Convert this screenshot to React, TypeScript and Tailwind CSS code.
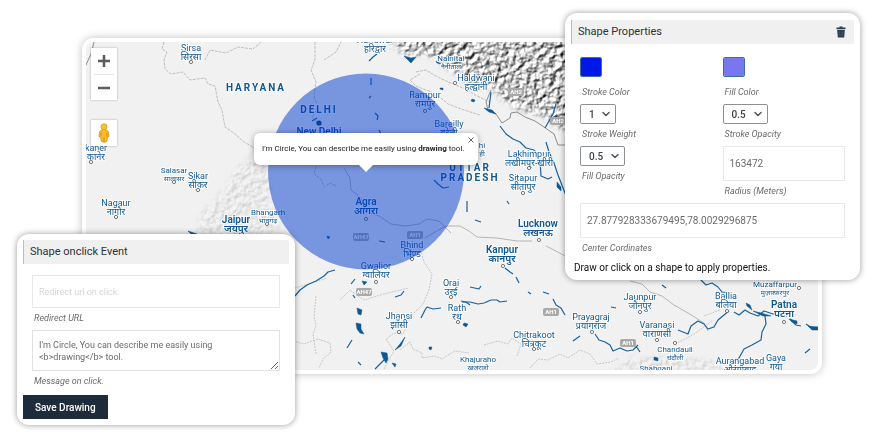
import React, { useState } from 'react';
import { ChevronDown } from 'lucide-react';

type Size = 'sm' | 'md' | 'lg';

interface City {
  name: string;
  hindi?: string;
  x: number;
  y: number;
  size: Size;
  dot?: [number, number];
}

const CITIES: City[] = [
  { name: 'Sirsa', hindi: 'सिरसा', x: 191, y: 51, size: 'md', dot: [191, 62] },
  { name: 'Haridwar', hindi: 'हरिद्वार', x: 375, y: 43, size: 'md' },
  { name: 'Nainital', hindi: 'नैनीताल', x: 451, y: 61, size: 'sm' },
  { name: 'Haldwani', hindi: 'हल्द्वानी', x: 476, y: 81, size: 'md', dot: [455, 83] },
  { name: 'Rampur', hindi: 'रामपुर', x: 425, y: 98, size: 'md', dot: [425, 111] },
  { name: 'Bareilly', hindi: 'बरेली', x: 449, y: 127, size: 'md' },
  { name: 'hi', hindi: 'ही', x: 482, y: 148, size: 'sm' },
  { name: 'New Delhi', x: 319, y: 135, size: 'lg' },
  { name: 'kaner', hindi: 'कानेर', x: 96, y: 151, size: 'md', dot: [91, 162] },
  { name: 'Salasar', hindi: 'सालासर', x: 174, y: 173, size: 'sm', dot: [174, 182] },
  { name: 'Sikar', hindi: 'सीकर', x: 198, y: 179, size: 'md', dot: [198, 190] },
  { name: 'Nagaur', hindi: 'नागौर', x: 116, y: 206, size: 'md', dot: [116, 217] },
  { name: 'Jaipur', hindi: 'जयपुर', x: 236, y: 223, size: 'lg' },
  { name: 'Bhangarh', hindi: 'भानगढ़', x: 268, y: 215, size: 'sm', dot: [267, 224] },
  { name: 'Agra', hindi: 'आगरा', x: 366, y: 205, size: 'lg', dot: [366, 219] },
  { name: 'Lakhimpur', hindi: 'लखीमपुर-खीरी', x: 529, y: 157, size: 'md', dot: [529, 168] },
  { name: 'Sitapur', hindi: 'सीतापुर', x: 523, y: 181, size: 'md', dot: [523, 193] },
  { name: 'Lucknow', hindi: 'लखनऊ', x: 538, y: 227, size: 'lg', dot: [539, 240] },
  { name: 'Kanpur', hindi: 'कानपुर', x: 502, y: 253, size: 'lg', dot: [503, 266] },
  { name: 'Bhind', hindi: 'भिण्ड', x: 412, y: 248, size: 'md', dot: [412, 259] },
  { name: 'Gwalior', hindi: 'ग्वालियर', x: 376, y: 269, size: 'md', dot: [376, 282] },
  { name: 'Orai', hindi: 'उरई', x: 451, y: 286, size: 'md', dot: [451, 297] },
  { name: 'Jhansi', hindi: 'झाँसी', x: 399, y: 319, size: 'md', dot: [399, 332] },
  { name: 'Rath', hindi: 'रथ', x: 457, y: 311, size: 'md', dot: [458, 322] },
  { name: 'Prayagraj', hindi: 'प्रयागराज', x: 591, y: 320, size: 'md', dot: [592, 332] },
  { name: 'Chitrakoot', hindi: 'चित्रकूट', x: 534, y: 338, size: 'md', dot: [534, 349] },
  { name: 'Khajuraho', hindi: 'खजुराहो', x: 478, y: 362, size: 'sm' },
  { name: 'Jaunpur', hindi: 'जौनपुर', x: 640, y: 300, size: 'md', dot: [640, 312] },
  { name: 'Varanasi', hindi: 'वाराणसी', x: 657, y: 328, size: 'md', dot: [657, 340] },
  { name: 'Chandauli', hindi: 'चंदौली', x: 675, y: 352, size: 'sm', dot: [675, 343] },
  { name: 'Shahganj', x: 656, y: 371, size: 'sm' },
  { name: 'Ballia', hindi: 'बलिया', x: 726, y: 299, size: 'md', dot: [727, 311] },
  { name: 'Muzaffarpur', hindi: 'मुज़फ़्फ़रपुर', x: 775, y: 287, size: 'sm', dot: [799, 288] },
  { name: 'Patna', hindi: 'पटना', x: 784, y: 308, size: 'lg', dot: [784, 322] },
  { name: 'Aurangabad', hindi: 'औरंगाबाद', x: 740, y: 364, size: 'md' },
  { name: 'Gaya', hindi: 'गया', x: 776, y: 361, size: 'md' },
];

const SIZE_CLASS: Record<Size, string> = {
  sm: 'text-[8px]',
  md: 'text-[9px]',
  lg: 'text-[10px] font-semibold',
};

const HINDI_CLASS: Record<Size, string> = {
  sm: 'text-[7px]',
  md: 'text-[9px]',
  lg: 'text-[10px] font-semibold',
};

const RIVERS = [
  'M295 296l5-6 7-5 9-4 8-5 4-4 7-2M351 284l4-5M355 298l-2-3M395 297l6-2 3-4M421 318l4-8 2-3 6 2 8-1M461 301l5 1 4 3',
  'M347 348l5-8M375 369l6-6 4-4M462 302l8 0 8 2 6-1 7-3 6 0 3 2 7-1',
  'M500 126l6 8 7 5 7 3 6 6 8 2 4 5M545 128l8-14 3-10M549 120l8-5M546 142l3 10 5 11 4 12 7 18 4 11',
  'M540 160l1 16 7 3 4-2M467 201l0 11M475 220l6 2M507 201l2 3M434 180l4 4 5 4 6-1M489 108l1-8 1-8',
  'M505 268l5 4 3 2M516 277l3 6M528 292l3 2M543 292l6 2M553 299l3 6 5 3 4 7M470 287l9 2 2-3M573 341l7-5M611 307l5 1',
  'M595 334l4 6 6 2 5 3 3 6 7-3 7 3 6-1 5-5M636 346l4 6',
  'M678 330l5 2 5 2 3-8 7-5 6 3 4 5 6-2 4-7 6-5 5-4M734 312l5 3 6-5 5 3 8 3 6-5 6 2 9 3 8 0',
  'M765 316l1 8-4 8-1 8-9 5-8 4-5 9-7 4M790 319l6 6 5 1M806 324l7 5 5-2M805 353l5-4',
  'M371 78l0 7M371 96l-2 2M375 113l3 3-1 4M379 130l2 4M312 121l5-3M369 61l4-4 4-3',
  'M700 279l6 6 6-2 6 4 4 5 8 1M662 285l4 3M358 362l3 3M385 242l-6-1',
];

const LAKES = [
  'M404 56l7 2 5-1-5 6z',
  'M484 108l8 2 4 4-7-2z',
  'M436 61l5 3-4-1z',
  'M472 99l3 1-1 2-3-1z',
  'M440 88l3 0 0 2-3-1z',
  'M357 308l5 2-1 5-3-1z',
  'M356 323l5 1 0 5 3 5-4-1-3-4z',
  'M381 352l6 1 1 6-2 4-3-5z',
  'M392 363l4 1-1 3z',
  'M405 337l-5 7-5 6 6-4z',
  'M464 323l4 1-2 3-3-2z',
  'M362 281l5 1-3 3z',
  'M429 347l3 0-1 3-2-1z',
  'M327 236l3 1-2 2z',
  'M746 303l4 2 2 5-5-4z',
  'M753 311l8 2 10 3-8 0z',
  'M654 357l4 1 0 3-4-1z',
  'M789 319l8 2 0 3-5-2z',
  'M808 326l10 1 0 3-6 0z',
  'M557 182l4 5 0 4-4-4z',
  'M188 231l9 3-5 1z',
];

const ROADS =
  'M344 168l6 10 1 12 10 8 6 14 12 4 12 8 14 2 14-2 8-5 12 2 12 12M546 246l8 4 11 6M690 280l-6-8-10-6M630 281l12 3 8 8 12 4 12 9 14 8 16 10 4 8M425 238l10-6 11-6 14 0 9 5 8 6 20 1 20 3 15 0';

const BORDERS =
  'M164 42l-2 7 5 3-3 8 1 9 6 5 12-2 7 8 15-2 3 6 7 2 3 16 4 8 3 17 9 6 10 9 9 5 12 16M205 60l5-10 16 3 12-6 15 2 8-7M315 42l0 18-4 10 5 12-2 14 4 12-6 9 8 8 2 18M316 166l-2 8 7 5 3 8 6-4 6 3M324 60l12-8 5-10M416 72l10-2 8 5 8 4 9 4 12 5 14 8 13 6M420 74l-10 6 6 6 20 8 12 10 16 6 16 5';

const BORDERS_SOUTH =
  'M316 296l-2 20 2 10-3 8 3 20M290 340l14 4 14-5 12 4 1 9-8 7-4 9M384 369l10-18-8-12 8-6 9 1 8-18 12-12 6-14 3-16-8-12-4-14M400 350l10-8 3 7 9 4 0 5 13-2 7 3 13-8 14 2M484 345l14-4 10 3 4-6 9 6-4 12M530 368l8-9 10 1 12-6 8 4 12-8 10 4 7 10 14-2 8-4M675 344l12-6 10-6 8-6 8-6M704 316l16-6M295 288l20-6 12-4M340 300l10-10 14 10 20-6 25-6';

const BORDER_NEPAL =
  'M491 90l-5 12 2 8 8 4 6 9 8-5 1-5 6-1 8 5 10 4 9 6 10 7 4 11 8 0';

const LabelText: React.FC<{ x: number; y: number; className: string; children: string }> = ({
  x,
  y,
  className,
  children,
}) => (
  <text
    x={x}
    y={y}
    textAnchor="middle"
    stroke="#fff"
    strokeWidth="2"
    strokeOpacity="0.85"
    strokeLinejoin="round"
    paintOrder="stroke"
    className={`fill-[#0f5791] ${className}`}
  >
    {children}
  </text>
);

const RoadBadge: React.FC<{ x: number; y: number; label: string }> = ({ x, y, label }) => (
  <g>
    <rect x={x - 8} y={y - 4} width="16" height="8" rx="2" fill="#a9a9a9" />
    <text x={x} y={y + 2} textAnchor="middle" fill="#fff" className="text-[6px] font-bold">
      {label}
    </text>
  </g>
);

const MapDrawing: React.FC = () => (
  <svg
    viewBox="86 42 732 328"
    preserveAspectRatio="xMinYMin slice"
    className="block h-[328px] w-full font-[Roboto,'Noto_Sans',sans-serif]"
    role="img"
    aria-label="Map"
  >
    <defs>
      <filter id="hills" x="0" y="0" width="100%" height="100%" colorInterpolationFilters="sRGB">
        <feTurbulence type="fractalNoise" baseFrequency="0.17" numOctaves="4" seed="8" result="noise" />
        <feDiffuseLighting in="noise" surfaceScale="3" lightingColor="#fff" diffuseConstant="1.08" result="lit">
          <feDistantLight azimuth="225" elevation="50" />
        </feDiffuseLighting>
        <feComposite in="lit" in2="SourceGraphic" operator="in" />
      </filter>
      <filter id="soft">
        <feGaussianBlur stdDeviation="3" />
      </filter>
      <mask id="ridge">
        <path
          d="M384 20l8 24 16 12 14-2 12 2 14 12 14 8 12 10 18 0 12 14 18 10 18 4 22 14 20 20V20z"
          fill="#fff"
          filter="url(#soft)"
        />
      </mask>
      <mask id="aravalli">
        <path
          d="M262 150l8 30 0 20 10 30-30 10-30 0-25 20 5-45 20-20 20-30z"
          fill="#fff"
          fillOpacity="0.4"
          filter="url(#soft)"
        />
        <path d="M600 380l30-22 50-2 40 6 20 18z" fill="#fff" fillOpacity="0.4" filter="url(#soft)" />
      </mask>
    </defs>

    <rect x="86" y="42" width="732" height="328" fill="#f1f1f1" />

    <g mask="url(#ridge)">
      <rect x="370" y="42" width="200" height="130" filter="url(#hills)" />
    </g>
    <g mask="url(#aravalli)" opacity="0.4">
      <rect x="180" y="140" width="110" height="120" filter="url(#hills)" />
      <rect x="600" y="345" width="140" height="25" filter="url(#hills)" />
    </g>

    <g fill="none">
      <path d={BORDERS} stroke="#bdbdbd" strokeWidth="1" strokeDasharray="3 1" />
      <path d={BORDERS_SOUTH} stroke="#c6c6c6" strokeWidth="1" strokeDasharray="2 1" />
      <path d={BORDER_NEPAL} stroke="#8d8d8d" strokeWidth="1" />
      <path d={ROADS} stroke="#b5b5b5" strokeWidth="1" />
      <path d="M94 42l-3 12-6 13" stroke="#8d8d8d" strokeWidth="1" />
      {RIVERS.map((d) => (
        <path key={d} d={d} stroke="#17629c" strokeWidth="1.2" strokeLinejoin="round" />
      ))}
    </g>
    {LAKES.map((d) => (
      <path key={d} d={d} fill="#0f5791" stroke="#0f5791" strokeWidth="0.5" />
    ))}

    <RoadBadge x={361} y={237} label="AH47" />
    <RoadBadge x={415} y={235} label="AH1" />
    <RoadBadge x={364} y={292} label="AH47" />
    <RoadBadge x={551} y={312} label="AH1" />
    <RoadBadge x={628} y={343} label="AH1" />
    <RoadBadge x={516} y={92} label="AH2" />
    <RoadBadge x={558} y={121} label="AH2" />

    {CITIES.map((city) => (
      <g key={city.name}>
        <LabelText x={city.x} y={city.y} className={SIZE_CLASS[city.size]}>
          {city.name}
        </LabelText>
        {city.hindi && (
          <LabelText x={city.x} y={city.y + (city.size === 'sm' ? 8 : 9)} className={HINDI_CLASS[city.size]}>
            {city.hindi}
          </LabelText>
        )}
        {city.dot && (
          <circle cx={city.dot[0]} cy={city.dot[1]} r="1.6" fill="#fff" stroke="#666" strokeWidth="0.9" />
        )}
      </g>
    ))}
    <circle cx="319" cy="123" r="2.6" fill="#0d4f66" />

    <LabelText x={256} y={91} className="text-[10px] font-bold tracking-[2px]">HARYANA</LabelText>
    <LabelText x={319} y={113} className="text-[10px] font-bold tracking-[2px]">DELHI</LabelText>
    <LabelText x={470} y={171} className="text-[10px] font-bold tracking-[2px]">UTTAR</LabelText>
    <LabelText x={470} y={181} className="text-[10px] font-bold tracking-[2px]">PRADESH</LabelText>

    <circle cx="366" cy="171.500" r="98" fill="#0039d0" fillOpacity="0.5" />
  </svg>
);

const Pegman: React.FC = () => (
  <svg viewBox="0 0 12 20" className="h-5 w-3">
    <path
      d="M3 7.200Q6 6 9 7.200Q10.600 8 10.700 10L11 13.500L9.400 14L9 18.500Q6 20 3.200 18.500L2.700 14L1 13.500L1.300 10Q1.400 8 3 7.200Z"
      fill="#fbbc2c"
      stroke="#c98d1b"
      strokeWidth="0.7"
    />
    <path d="M6 14v5M3.300 9.500l-.4 4M8.700 9.500l.4 4" stroke="#b97d12" strokeWidth="0.7" fill="none" />
    <circle cx="6" cy="3.800" r="3.100" fill="#fbc02d" stroke="#c98d1b" strokeWidth="0.6" />
  </svg>
);

const TrashIcon: React.FC = () => (
  <svg viewBox="0 0 10 12" className="h-3 w-2.5">
    <path d="M3.500 0.500h3v1h3v1.700h-9V1.500h3z" fill="#2c3e50" />
    <path d="M1.200 4h7.600L8.200 11.500H1.800z" fill="#2c3e50" />
    <path d="M3.500 5.500l.3 4.500M6.500 5.500l-.3 4.500" stroke="#5a6876" strokeWidth="0.5" />
  </svg>
);

const MapView: React.FC = () => {
  const [showInfo, setShowInfo] = useState(true);

  return (
    <section className="relative ml-[82px] mr-[55px] overflow-hidden rounded-xl border-4 border-white shadow-[0_0_8px_rgba(0,0,0,0.25)]">
      <MapDrawing />

      {/* Map controls */}
      <div className="absolute left-[5px] top-1.5 flex flex-col gap-5">
        <div className="flex w-[26px] flex-col items-center bg-white shadow-[0_0_2px_rgba(0,0,0,0.3)]">
          <button aria-label="Zoom in" className="flex h-[26px] w-full items-center justify-center">
            <svg viewBox="0 0 12 12" className="size-3" fill="none" stroke="#5c5c5c" strokeWidth="2.500">
              <path d="M6 0v12M0 6h12" />
            </svg>
          </button>
          <div className="h-px w-5 bg-[#e6e6e6]" />
          <button aria-label="Zoom out" className="flex h-[25px] w-full items-center justify-center">
            <svg viewBox="0 0 12 12" className="size-3" fill="none" stroke="#5c5c5c" strokeWidth="2.500">
              <path d="M0 6h12" />
            </svg>
          </button>
        </div>
        <button
          aria-label="Street view"
          className="flex size-[26px] items-center justify-center bg-white shadow-[0_0_2px_rgba(0,0,0,0.3)]"
        >
          <Pegman />
        </button>
      </div>

      {/* Info window */}
      {showInfo && (
        <div className="absolute left-[168px] top-[91px] flex h-8 w-56 items-center rounded-md bg-white px-2 shadow-[0_1px_6px_rgba(0,0,0,0.35)]">
          <p className="whitespace-nowrap font-[Roboto,sans-serif] text-[8px] text-[#222]">
            I'm Circle, You can describe me easily using <b>drawing</b> tool.
          </p>
          <button
            aria-label="Close"
            onClick={() => setShowInfo(false)}
            className="absolute right-1 top-1 flex size-1.5 items-center justify-center"
          >
            <svg viewBox="0 0 6 6" className="size-1.5" stroke="#666" strokeWidth="1">
              <path d="M0.500 0.500l5 5M5.500 0.500l-5 5" />
            </svg>
          </button>
          <svg viewBox="0 0 14 7" className="absolute left-1/2 top-full h-[7px] w-3.5 -translate-x-1/2">
            <path d="M0 0h14L7 7z" fill="#fff" />
          </svg>
        </div>
      )}
    </section>
  );
};

const PanelHeader: React.FC<{ title: string; children?: React.ReactNode }> = ({ title, children }) => (
  <header className="flex h-6 items-center justify-between border-l border-[#f5bd2b] bg-[#f0f0f0] pl-1.5 pr-2">
    <h2 className="text-[11px] text-[#2c3338]">{title}</h2>
    {children}
  </header>
);

const FieldLabel: React.FC<{ htmlFor: string; children: string }> = ({ htmlFor, children }) => (
  <label htmlFor={htmlFor} className="ml-0.5 block text-[9px] leading-4 italic text-[#6b6b6b]">
    {children}
  </label>
);

const ColorField: React.FC<{ id: string; label: string; color: string }> = ({ id, label, color }) => (
  <div className="flex flex-col items-start gap-[7px]">
    <input
      id={id}
      type="color"
      defaultValue={color}
      className="block h-5 w-[22px] rounded-xs border border-[#3a6ea8] p-0 [&::-webkit-color-swatch]:border-none [&::-webkit-color-swatch-wrapper]:p-0"
    />
    <FieldLabel htmlFor={id}>{label}</FieldLabel>
  </div>
);

const SelectField: React.FC<{ id: string; label: string; options: string[]; value: string }> = ({
  id,
  label,
  options,
  value,
}) => (
  <div className="flex flex-col items-start gap-0.5">
    <div className="relative">
      <select
        id={id}
        defaultValue={value}
        className="block h-5 appearance-none rounded-xs border border-[#8c8f94] bg-white pl-2 pr-5 text-[10px] font-medium text-[#3c434a]"
      >
        {options.map((option) => (
          <option key={option}>{option}</option>
        ))}
      </select>
      <ChevronDown strokeWidth={3} className="pointer-events-none absolute right-1 top-1 size-3 text-[#50575e]" />
    </div>
    <FieldLabel htmlFor={id}>{label}</FieldLabel>
  </div>
);

const ShapeProperties: React.FC = () => (
  <aside className="absolute right-[17px] top-[13px] w-[295px] rounded-xl bg-white px-1.5 pb-1 pt-[7px] shadow-[0_0_6px_rgba(0,0,0,0.4)]">
    <PanelHeader title="Shape Properties">
      <button aria-label="Delete shape">
        <TrashIcon />
      </button>
    </PanelHeader>
    <div className="mt-[13px] grid grid-cols-2 gap-x-5 gap-y-1 px-[9px]">
      <ColorField id="stroke-color" label="Stroke Color" color="#0018e6" />
      <ColorField id="fill-color" label="Fill Color" color="#7a77ee" />
      <SelectField id="stroke-weight" label="Stroke Weight" options={['1']} value="1" />
      <SelectField id="stroke-opacity" label="Stroke Opacity" options={['0.5']} value="0.5" />
      <SelectField id="fill-opacity" label="Fill Opacity" options={['0.5']} value="0.5" />
      <div className="flex flex-col gap-0.5">
        <input
          id="radius"
          defaultValue="163472"
          className="h-[35px] w-full border border-[#e8e8e8] px-1.5 text-[10px] text-[#6b6b6b]"
        />
        <FieldLabel htmlFor="radius">Radius (Meters)</FieldLabel>
      </div>
      <div className="col-span-2 flex flex-col gap-0.5">
        <input
          id="center"
          defaultValue="27.877928333679495,78.0029296875"
          className="h-[35px] w-full border border-[#e8e8e8] px-1.5 text-[10px] text-[#6b6b6b]"
        />
        <FieldLabel htmlFor="center">Center Cordinates</FieldLabel>
      </div>
    </div>
    <p className="ml-[3px] mt-1 text-[10px] leading-4 text-[#111]">
      Draw or click on a shape to apply properties.
    </p>
  </aside>
);

const ShapeEvent: React.FC = () => (
  <aside className="absolute left-[17px] top-[234px] w-[278px] rounded-xl bg-white p-1.5 shadow-[0_0_6px_rgba(0,0,0,0.4)]">
    <PanelHeader title="Shape onclick Event" />
    <div className="mt-[11px] flex flex-col gap-1 px-[9px]">
      <div className="flex flex-col gap-0.5">
        <input
          id="redirect-url"
          placeholder="Redirect url on click."
          className="h-[33px] w-full border border-[#e8e8e8] px-1.5 text-[9px] placeholder:text-[#d5d5d5]"
        />
        <FieldLabel htmlFor="redirect-url">Redirect URL</FieldLabel>
      </div>
      <div className="flex flex-col gap-0.5">
        <textarea
          id="click-message"
          defaultValue="I'm Circle, You can describe me easily using <b>drawing</b> tool."
          className="block h-[41px] w-full border border-[#e0e0e0] py-2 pl-1.5 pr-12 text-[9px] leading-3 text-[#6b6b6b]"
        />
        <FieldLabel htmlFor="click-message">Message on click.</FieldLabel>
      </div>
    </div>
    <button className="mt-1.5 block h-6 bg-[#1d2b3a] px-3 text-[10px] font-medium text-white">
      Save Drawing
    </button>
  </aside>
);

export default function App() {
  return (
    <main className="relative min-h-screen bg-white pt-[38px] font-[Roboto,sans-serif]">
      <MapView />
      <ShapeProperties />
      <ShapeEvent />
    </main>
  );
}
